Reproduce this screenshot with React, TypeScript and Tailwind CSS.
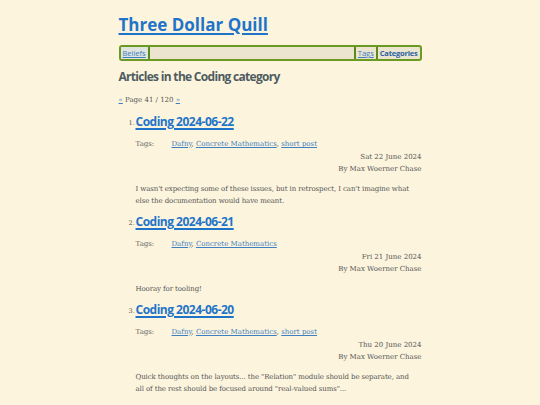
const posts = [
  {
    title: 'Coding 2024-06-22',
    tags: ['Dafny', 'Concrete Mathematics', 'short post'],
    date: 'Sat 22 June 2024',
    body: ["I wasn't expecting some of these issues, but in retrospect, I can't imagine what", 'else the documentation would have meant.'],
  },
  {
    title: 'Coding 2024-06-21',
    tags: ['Dafny', 'Concrete Mathematics'],
    date: 'Fri 21 June 2024',
    body: ['Hooray for tooling!'],
  },
  {
    title: 'Coding 2024-06-20',
    tags: ['Dafny', 'Concrete Mathematics', 'short post'],
    date: 'Thu 20 June 2024',
    body: [
      'Quick thoughts on the layouts... the "Relation" module should be separate, and',
      'all of the rest should be focused around "real-valued sums"...',
    ],
  },
];

const sans = "font-['Open_Sans',sans-serif]";
const serif = "font-['DejaVu_Serif',serif]";

export default function App() {
  return (
    <div className="min-h-[405px] bg-[#fcf4dd] text-[#555]">
      <div className="mx-auto w-[303px] pt-[14px]">
        <h1 className={`${sans} text-[17px] font-bold leading-[22px]`}>
          <a href="#" className="text-[#1f74c9] underline decoration-2 underline-offset-2">
            Three Dollar Quill
          </a>
        </h1>
        <nav className="mt-[9px] flex h-[16px] items-stretch rounded-[3px] border-2 border-[#6b9a22] bg-[#ebe4cf] text-[7.5px] leading-[12px]">
          <a href="#" className={`${sans} bg-[#dfe4dc] px-[2px] text-[#3d7fc1] underline`}>
            Beliefs
          </a>
          <span className="w-[2px] bg-[#5a8a1c]" />
          <span className="flex-1" />
          <span className="w-[2px] bg-[#5a8a1c]" />
          <a href="#" className={`${sans} px-[2px] text-[#3d7fc1] underline`}>
            Tags
          </a>
          <span className="w-[2px] bg-[#5a8a1c]" />
          <span className={`${sans} px-[2px] font-bold tracking-[-0.2px] text-[#2a62a3]`}>Categories</span>
        </nav>
        <h2 className={`${sans} mt-[8px] text-[12px] font-bold leading-[16px] tracking-[-0.7px] text-[#4f5c5f]`}>
          Articles in the Coding category
        </h2>
        <p className={`${serif} mt-[10px] text-[7px] leading-[10px] text-[#555]`}>
          <a href="#" className="text-[#3d7fc1] underline">«</a> Page 41 / 120{' '}
          <a href="#" className="text-[#3d7fc1] underline">»</a>
        </p>
        <ol className="mt-[8px] pl-[10px]">
          {posts.map((p, i) => (
            <li key={p.title} className="mb-[6px] flex items-start">
              <span className={`${serif} mt-[5px] w-[7px] shrink-0 text-[6.5px] leading-[10px]`}>{i + 1}.</span>
              <div className="flex-1">
                <h3 className={`${sans} text-[12px] font-bold leading-[18px] tracking-[-0.5px]`}>
                  <a href="#" className="text-[#1f74c9] underline decoration-[1.5px] underline-offset-2">
                    {p.title}
                  </a>
                </h3>
                <div className={`${serif} mt-[7px] flex text-[7px] leading-[12px]`}>
                  <span className="w-[36px] text-[#666]">Tags:</span>
                  <span>
                    {p.tags.map((t, j) => (
                      <span key={t}>
                        <a href="#" className="text-[#3d7fc1] underline">{t}</a>
                        {j < p.tags.length - 1 ? ', ' : ''}
                      </span>
                    ))}
                  </span>
                </div>
                <div className={`${serif} mt-[1px] text-right text-[7px] leading-[12px]`}>
                  <div>{p.date}</div>
                  <div>By Max Woerner Chase</div>
                </div>
                <div className={`${serif} mt-[8px] text-[7px] leading-[12px] tracking-[-0.1px]`}>
                  {p.body.map((line) => (
                    <div key={line} className="whitespace-nowrap">{line}</div>
                  ))}
                </div>
              </div>
            </li>
          ))}
        </ol>
      </div>
    </div>
  );
}
